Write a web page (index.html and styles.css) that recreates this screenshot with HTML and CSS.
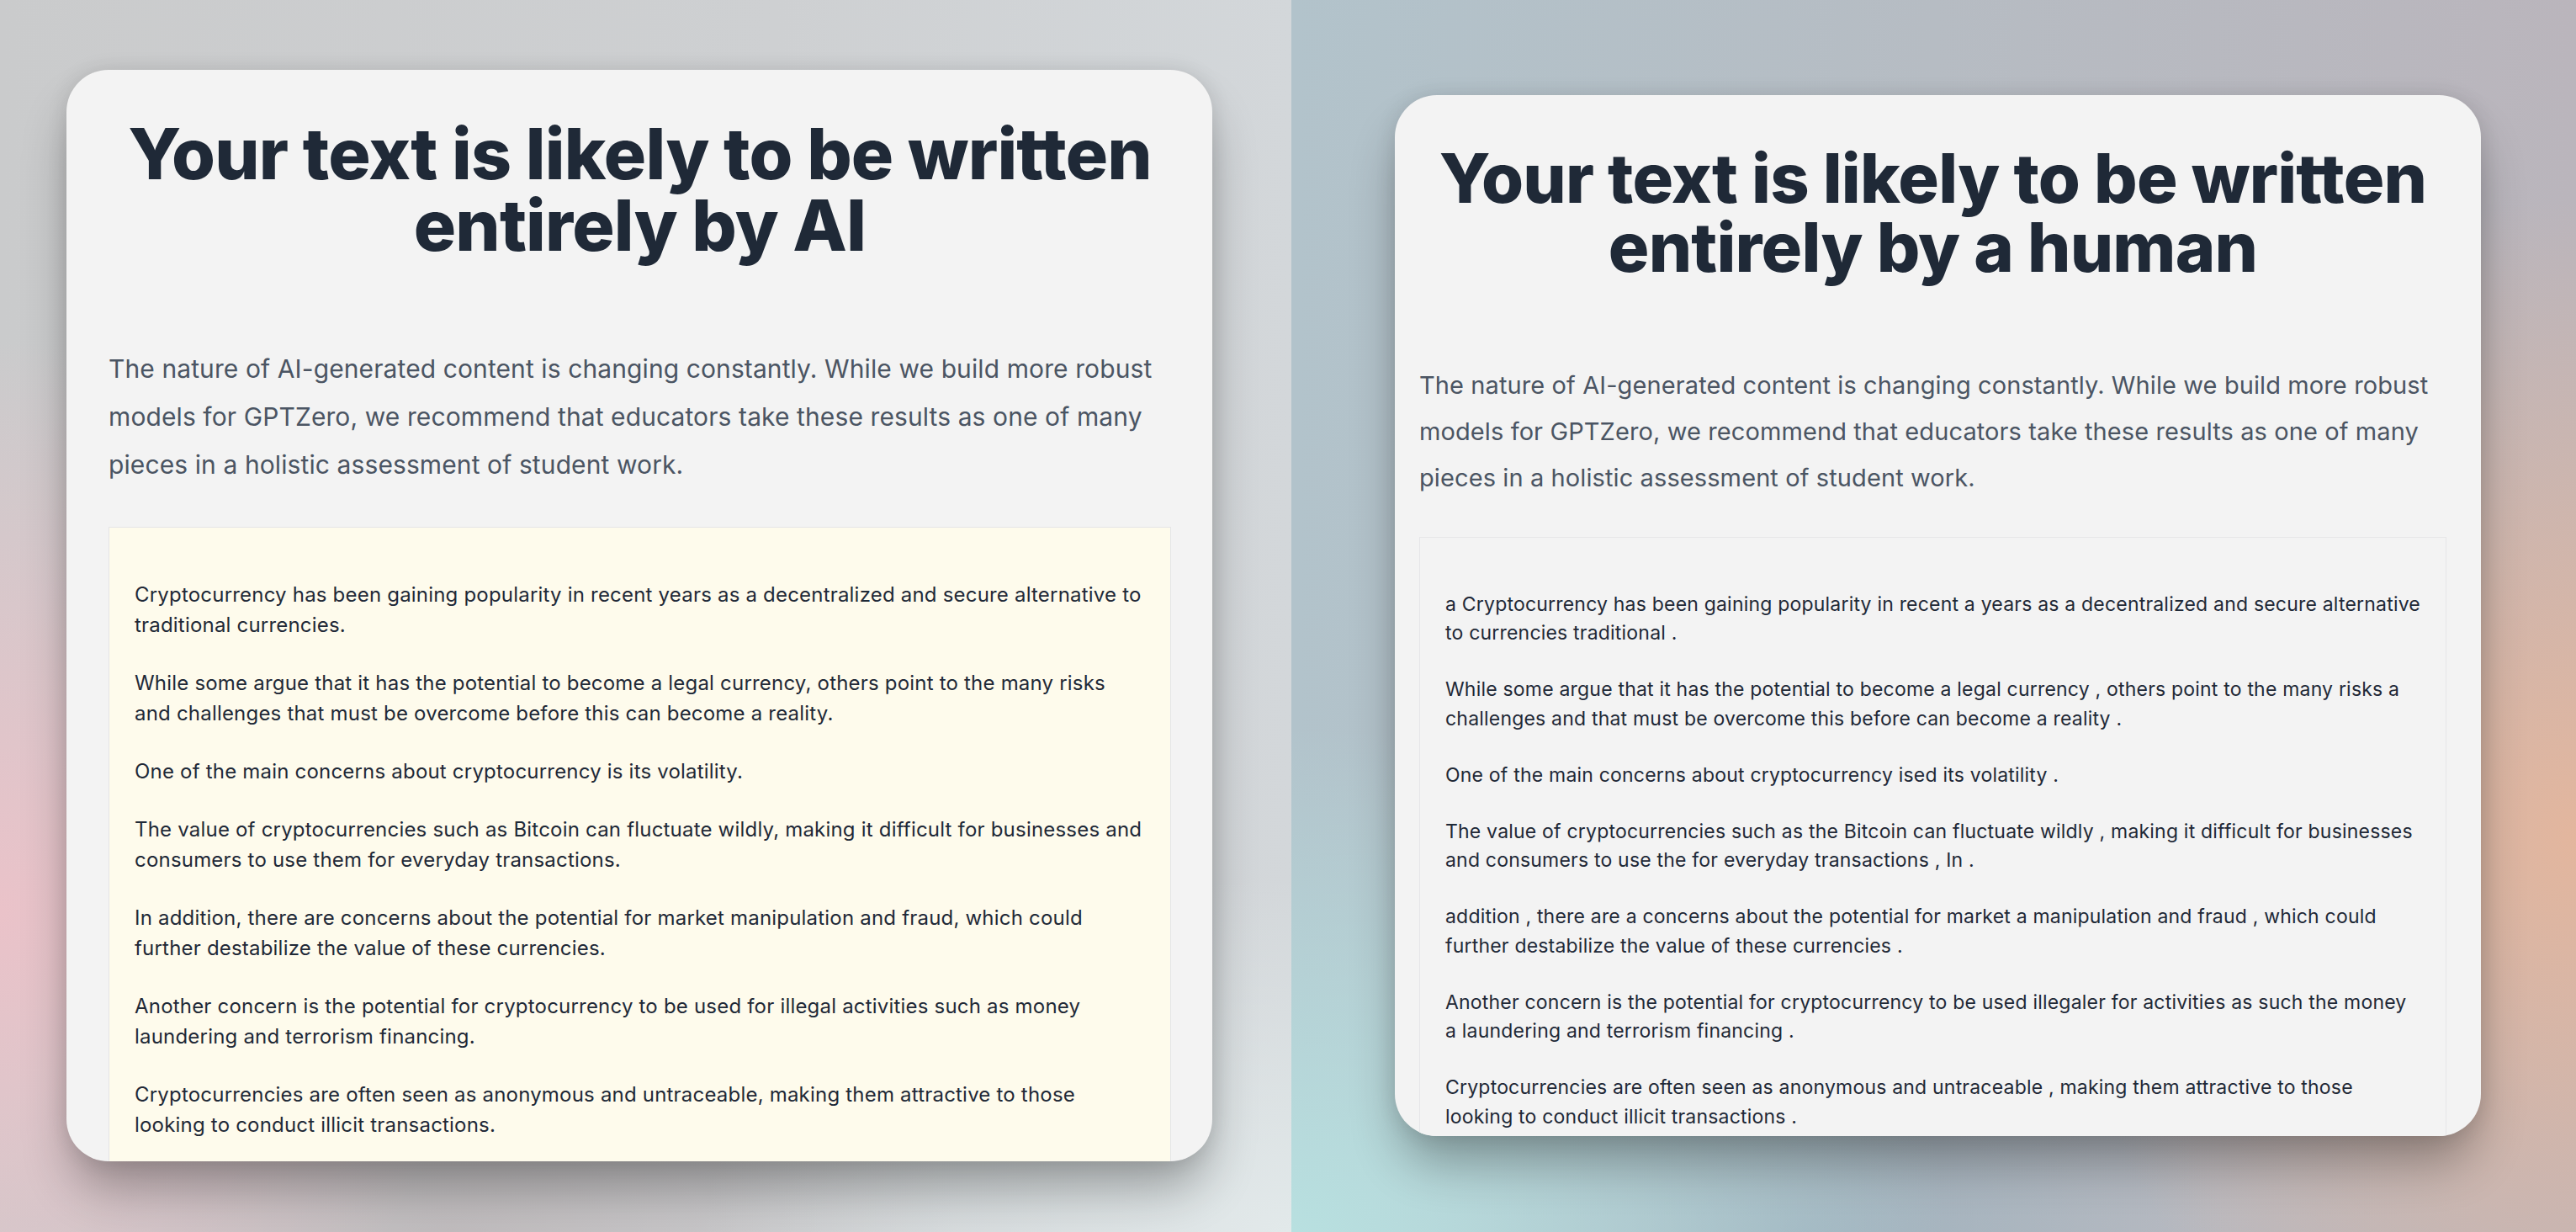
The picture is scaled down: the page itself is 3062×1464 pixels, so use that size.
FILE: index.html
```html
<!DOCTYPE html>
<html lang="en">
<head>
<meta charset="utf-8">
<title>GPTZero results</title>
<link rel="stylesheet" href="styles.css">
</head>
<body>
<div class="stage">
  <section class="panel panel-ai">
    <div class="card card-ai">
      <h1 class="title">Your text is likely to be written entirely by AI</h1>
      <p class="lead">The nature of AI-generated content is changing constantly. While we build more robust models for GPTZero, we recommend that educators take these results as one of many pieces in a holistic assessment of student work.</p>
      <div class="sample sample-ai">
        <p>Cryptocurrency has been gaining popularity in recent years as a decentralized and secure alternative to traditional currencies.</p>
        <p>While some argue that it has the potential to become a legal currency, others point to the many risks and challenges that must be overcome before this can become a reality.</p>
        <p>One of the main concerns about cryptocurrency is its volatility.</p>
        <p>The value of cryptocurrencies such as Bitcoin can fluctuate wildly, making it difficult for businesses and consumers to use them for everyday transactions.</p>
        <p>In addition, there are concerns about the potential for market manipulation and fraud, which could further destabilize the value of these currencies.</p>
        <p>Another concern is the potential for cryptocurrency to be used for illegal activities such as money laundering and terrorism financing.</p>
        <p>Cryptocurrencies are often seen as anonymous and untraceable, making them attractive to those looking to conduct illicit transactions.</p>
      </div>
    </div>
  </section>
  <section class="panel panel-human">
    <div class="card card-human">
      <h1 class="title">Your text is likely to be written entirely by a human</h1>
      <p class="lead">The nature of AI-generated content is changing constantly. While we build more robust models for GPTZero, we recommend that educators take these results as one of many pieces in a holistic assessment of student work.</p>
      <div class="sample sample-human">
        <p>a Cryptocurrency has been gaining popularity in recent a years as a decentralized and secure alternative to currencies traditional .</p>
        <p>While some argue that it has the potential to become a legal currency , others point to the many risks a challenges and that must be overcome this before can become a reality .</p>
        <p>One of the main concerns about cryptocurrency ised its volatility .</p>
        <p>The value of cryptocurrencies such as the Bitcoin can fluctuate wildly , making it difficult for businesses and consumers to use the for everyday transactions , In .</p>
        <p>addition , there are a concerns about the potential for market a manipulation and fraud , which could further destabilize the value of these currencies .</p>
        <p>Another concern is the potential for cryptocurrency to be used illegaler for activities as such the money a&nbsp;laundering and terrorism financing .</p>
        <p>Cryptocurrencies are often seen as anonymous and untraceable , making them attractive to those looking to conduct illicit transactions .</p>
      </div>
    </div>
  </section>
</div>
</body>
</html>
```

FILE: styles.css
```css
* { box-sizing: border-box; }

html, body {
  margin: 0;
  padding: 0;
  width: 3062px;
  height: 1464px;
  overflow: hidden;
}

body {
  font-family: Inter, "Noto Sans", "Liberation Sans", sans-serif;
}

.stage {
  display: flex;
  width: 3062px;
  height: 1464px;
}

.panel {
  height: 1464px;
  flex: none;
}

.panel-ai {
  width: 1535px;
  padding: 83px 0 0 79px;
  background:
    radial-gradient(ellipse 560px 680px at 0% 74%, rgba(236, 194, 201, 0.95), rgba(236, 194, 201, 0) 100%),
    radial-gradient(ellipse 700px 420px at 100% 100%, rgba(226, 233, 234, 1), rgba(226, 233, 234, 0) 100%),
    radial-gradient(ellipse 600px 300px at 35% 100%, rgba(190, 184, 186, 0.8), rgba(190, 184, 186, 0) 100%),
    linear-gradient(90deg, #cacbcc 0%, #ced0d2 60%, #d3d7da 100%);
}

.panel-human {
  width: 1527px;
  padding: 113px 0 0 123px;
  background:
    radial-gradient(ellipse 620px 760px at 100% 68%, rgba(229, 182, 156, 0.95), rgba(229, 182, 156, 0) 100%),
    radial-gradient(ellipse 780px 600px at 0% 100%, rgba(184, 224, 224, 1), rgba(184, 224, 224, 0) 100%),
    radial-gradient(ellipse 500px 260px at 40% 100%, rgba(150, 172, 186, 0.7), rgba(150, 172, 186, 0) 100%),
    linear-gradient(90deg, #b2c3cb 0%, #b6bcc3 50%, #bab5bc 100%);
}

.card {
  background: #f3f3f3;
  border-radius: 50px;
  overflow: hidden;
  box-shadow:
    0 0 24px rgba(0, 0, 0, 0.10),
    0 38px 60px -8px rgba(0, 0, 0, 0.32);
}

.card-ai {
  width: 1362px;
  height: 1297px;
  padding: 57px 49px 0 50px;
}

.card-human {
  width: 1291px;
  height: 1237px;
  padding: 58px 41px 0 29px;
}

.title {
  margin: 0;
  text-align: center;
  color: #1f2937;
  font-weight: 800;
  letter-spacing: -0.01em;
}

.card-ai .title {
  font-size: 84px;
  line-height: 85px;
}

.card-human .title {
  font-size: 81px;
  line-height: 82px;
}

.lead {
  color: #4b5563;
  margin: 0;
  letter-spacing: 0.1px;
}

.card-ai .lead {
  margin: 100px 0 45px;
  font-size: 30px;
  line-height: 57px;
}

.card-human .lead {
  margin: 95px 0 43px;
  font-size: 29px;
  line-height: 55px;
}

.sample {
  border: 1px solid #e4e5e7;
  color: #1f2937;
}

.sample-ai {
  background: #fefbec;
  padding: 29px 30px 40px;
  font-size: 24px;
  line-height: 36px;
  letter-spacing: 0.2px;
}

.sample-ai p {
  margin: 33px 0;
}

.sample-human {
  background: #f3f3f3;
  border-color: #e6e6e8;
  padding: 29px 27px 40px 30px;
  font-size: 23px;
  line-height: 34.5px;
  letter-spacing: 0.2px;
}

.sample-human p {
  margin: 32.5px 0;
}
```
